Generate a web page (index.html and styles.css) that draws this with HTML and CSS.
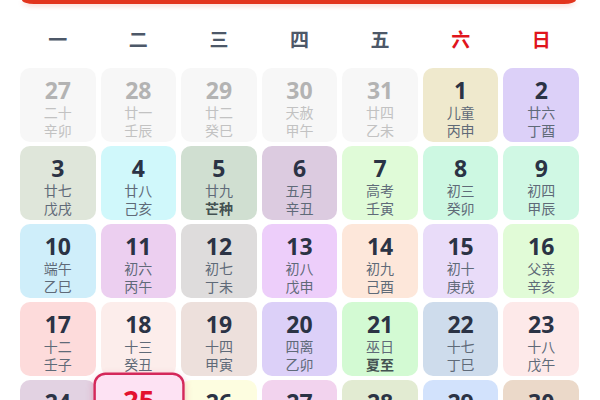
FILE: index.html
```html
<!DOCTYPE html>
<html lang="zh">
<head>
<meta charset="utf-8">
<link rel="stylesheet" href="styles.css">
</head>
<body>
<div class="page">
  <div class="topbar"></div>
  <div class="weekdays">
    <div class="wd">一</div><div class="wd">二</div><div class="wd">三</div><div class="wd">四</div><div class="wd">五</div><div class="wd weekend">六</div><div class="wd weekend">日</div>
  </div>
  <div class="grid">
    <div class="cell other"><div class="num">27</div><div class="lu">二十</div><div class="lu">辛卯</div></div>
    <div class="cell other"><div class="num">28</div><div class="lu">廿一</div><div class="lu">壬辰</div></div>
    <div class="cell other"><div class="num">29</div><div class="lu">廿二</div><div class="lu">癸巳</div></div>
    <div class="cell other"><div class="num">30</div><div class="lu">天赦</div><div class="lu">甲午</div></div>
    <div class="cell other"><div class="num">31</div><div class="lu">廿四</div><div class="lu">乙未</div></div>
    <div class="cell c-khaki"><div class="num">1</div><div class="lu">儿童</div><div class="lu">丙申</div></div>
    <div class="cell c-lavender"><div class="num">2</div><div class="lu">廿六</div><div class="lu">丁酉</div></div>

    <div class="cell c-sage"><div class="num">3</div><div class="lu">廿七</div><div class="lu">戊戌</div></div>
    <div class="cell c-cyan"><div class="num">4</div><div class="lu">廿八</div><div class="lu">己亥</div></div>
    <div class="cell c-green-grey"><div class="num">5</div><div class="lu">廿九</div><div class="lu term">芒种</div></div>
    <div class="cell c-mauve"><div class="num">6</div><div class="lu">五月</div><div class="lu">辛丑</div></div>
    <div class="cell c-pale-green"><div class="num">7</div><div class="lu">高考</div><div class="lu">壬寅</div></div>
    <div class="cell c-mint"><div class="num">8</div><div class="lu">初三</div><div class="lu">癸卯</div></div>
    <div class="cell c-mint2"><div class="num">9</div><div class="lu">初四</div><div class="lu">甲辰</div></div>

    <div class="cell c-sky"><div class="num">10</div><div class="lu">端午</div><div class="lu">乙巳</div></div>
    <div class="cell c-orchid"><div class="num">11</div><div class="lu">初六</div><div class="lu">丙午</div></div>
    <div class="cell c-grey"><div class="num">12</div><div class="lu">初七</div><div class="lu">丁未</div></div>
    <div class="cell c-lilac"><div class="num">13</div><div class="lu">初八</div><div class="lu">戊申</div></div>
    <div class="cell c-peach"><div class="num">14</div><div class="lu">初九</div><div class="lu">己酉</div></div>
    <div class="cell c-lavender2"><div class="num">15</div><div class="lu">初十</div><div class="lu">庚戌</div></div>
    <div class="cell c-lime"><div class="num">16</div><div class="lu">父亲</div><div class="lu">辛亥</div></div>

    <div class="cell c-pink"><div class="num">17</div><div class="lu">十二</div><div class="lu">壬子</div></div>
    <div class="cell c-blush"><div class="num">18</div><div class="lu">十三</div><div class="lu">癸丑</div></div>
    <div class="cell c-beige"><div class="num">19</div><div class="lu">十四</div><div class="lu">甲寅</div></div>
    <div class="cell c-lavender"><div class="num">20</div><div class="lu">四离</div><div class="lu">乙卯</div></div>
    <div class="cell c-green"><div class="num">21</div><div class="lu">巫日</div><div class="lu term">夏至</div></div>
    <div class="cell c-steel"><div class="num">22</div><div class="lu">十七</div><div class="lu">丁巳</div></div>
    <div class="cell c-rose"><div class="num">23</div><div class="lu">十八</div><div class="lu">戊午</div></div>

    <div class="cell c-mauve2"><div class="num">24</div><div class="lu">十九</div><div class="lu">己未</div></div>
    <div class="cell today"><div class="num">25</div><div class="lu">二十</div><div class="lu">庚申</div></div>
    <div class="cell c-cream"><div class="num">26</div><div class="lu">廿一</div><div class="lu">辛酉</div></div>
    <div class="cell c-pink2"><div class="num">27</div><div class="lu">廿二</div><div class="lu">壬戌</div></div>
    <div class="cell c-olive"><div class="num">28</div><div class="lu">廿三</div><div class="lu">癸亥</div></div>
    <div class="cell c-blue"><div class="num">29</div><div class="lu">廿四</div><div class="lu">甲子</div></div>
    <div class="cell c-tan"><div class="num">30</div><div class="lu">廿五</div><div class="lu">乙丑</div></div>
  </div>
</div>
</body>
</html>
```

FILE: styles.css
```css
html, body {
  margin: 0;
  padding: 0;
  background: #ffffff;
}
body {
  font-family: "Noto Sans", "Open Sans", "Noto Sans CJK SC", sans-serif;
  width: 600px;
  height: 400px;
  overflow: hidden;
}
.page {
  padding: 0 21px 0 20px;
}
.topbar {
  height: 4px;
  margin: 0 3px 0 2px;
  background: #e2341d;
  border-radius: 0 0 12px 12px / 0 0 4px 4px;
  box-shadow: 0 2px 5px rgba(226, 52, 29, 0.22);
}
.weekdays {
  display: grid;
  grid-template-columns: repeat(7, 1fr);
  column-gap: 5px;
  margin-top: 23px;
  margin-bottom: 17px;
}
.wd {
  text-align: center;
  height: 24px;
  line-height: 24px;
  font-family: "Noto Sans CJK SC", sans-serif;
  font-size: 19px;
  font-weight: 700;
  color: #4d5868;
}
.wd.weekend {
  color: #e0141c;
}
.grid {
  display: grid;
  grid-template-columns: repeat(7, 1fr);
  grid-auto-rows: 74px;
  column-gap: 5px;
  row-gap: 4px;
}
.cell {
  border-radius: 10px;
  text-align: center;
  padding-top: 9px;
  box-sizing: border-box;
}
.num {
  font-family: "Open Sans", "Noto Sans", sans-serif;
  font-size: 23px;
  font-weight: 700;
  line-height: 26px;
  color: #2b3345;
}
.lu {
  font-family: "Noto Sans CJK SC", sans-serif;
  font-size: 14px;
  line-height: 18px;
  color: #5f6a78;
}
.lu.term {
  font-weight: 700;
  color: #445252;
}
.cell.other {
  background: #f7f7f7;
}
.cell.other .num {
  color: #b3b3b3;
}
.cell.other .lu {
  color: #c2c2c2;
}
.cell.today {
  background: #fde2f3;
  border: 2px solid #d4285a;
  padding-top: 7px;
  transform: scale(1.2);
  box-shadow: 0 2px 6px rgba(212, 40, 90, 0.25);
}
.cell.today .num {
  color: #e3122f;
}
.c-khaki { background: #efe9cd; }
.c-lavender { background: #dcd0f8; }
.c-sage { background: #dfe6da; }
.c-cyan { background: #d0f8fb; }
.c-green-grey { background: #d0dfd1; }
.c-mauve { background: #dccbe0; }
.c-pale-green { background: #e0fbd8; }
.c-mint { background: #cdf8e2; }
.c-mint2 { background: #d0f8e4; }
.c-sky { background: #cfeefa; }
.c-orchid { background: #eccff0; }
.c-grey { background: #dedcdc; }
.c-lilac { background: #edcefa; }
.c-peach { background: #fde7da; }
.c-lavender2 { background: #e9dcf9; }
.c-lime { background: #e1fbd7; }
.c-pink { background: #fddbdb; }
.c-blush { background: #fcedeb; }
.c-beige { background: #ede0dc; }
.c-green { background: #d3fad3; }
.c-steel { background: #cedcec; }
.c-rose { background: #fde9e9; }
.c-mauve2 { background: #e2d2e2; }
.c-cream { background: #fdfde0; }
.c-pink2 { background: #f2d3ee; }
.c-olive { background: #e2ebd2; }
.c-blue { background: #d2e2fc; }
.c-tan { background: #ebd9c9; }
```
